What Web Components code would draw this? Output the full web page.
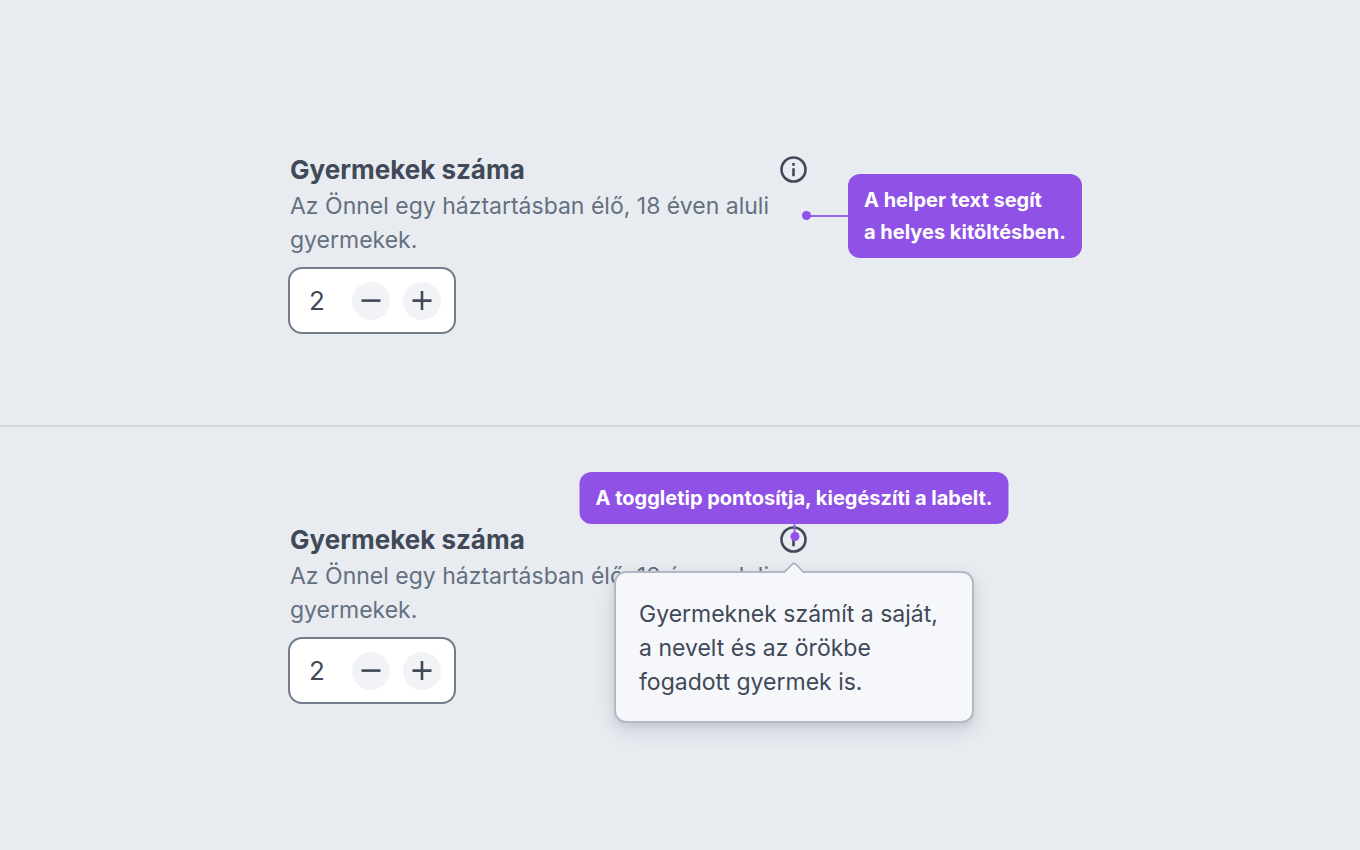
<!DOCTYPE html>
<html lang="hu">
<head>
<meta charset="utf-8">
<meta name="viewport" content="width=device-width, initial-scale=1">
<title>Gyermekek száma</title>
<style>
  body {
    margin: 0;
    background: #e8ecf1;
    color: #404957;
    font-family: Inter, "Liberation Sans", sans-serif;
  }
</style>
</head>
<body>
<doc-board>
  <doc-example>
    <stepper-field name="Gyermekek száma" value="2">
      Az Önnel egy háztartásban élő, 18 éven aluli gyermekek.
      <call-out slot="side" pointer="left">A helper text segít<br>a helyes kitöltésben.</call-out>
    </stepper-field>
  </doc-example>
  <doc-example compact>
    <stepper-field name="Gyermekek száma" value="2">
      Az Önnel egy háztartásban élő, 18 éven aluli gyermekek.
      <toggle-tip slot="tip">Gyermeknek számít a saját,<br>a nevelt és az örökbe<br>fogadott gyermek is.</toggle-tip>
      <call-out slot="above" pointer="down">A toggletip pontosítja, kiegészíti a labelt.</call-out>
    </stepper-field>
  </doc-example>
</doc-board>

<script>
class ShadowElement extends HTMLElement {
  constructor() {
    super();
    this.attachShadow({ mode: "open" }).innerHTML = this.constructor.markup;
  }
}

class DocBoard extends ShadowElement {
  static markup = `
    <style>
      :host { display: grid; grid-template-rows: 1fr 1fr; min-height: 100vh; }
      ::slotted(:not(:first-child)) { border-top: 2px solid #d0d6dc; }
    </style>
    <slot></slot>`;
}

class DocExample extends ShadowElement {
  static markup = `
    <style>
      :host { display: block; box-sizing: border-box; padding: 152px 24px 80px; }
      :host([compact]) { padding-top: 95px; }
      .column { max-width: 784px; margin: 0 auto; }
    </style>
    <div class="column"><slot></slot></div>`;
}

class StepperField extends ShadowElement {
  static markup = `
    <style>
      :host { display: block; position: relative; max-width: 520px; }
      .head { display: flex; justify-content: space-between; align-items: center; height: 36px; padding-left: 2px; }
      label { font-size: 26px; font-weight: 650; line-height: 36px; }
      .info { position: relative; display: flex; }
      button { border: 0; padding: 0; background: none; color: inherit; cursor: pointer; }
      .info button { display: block; width: 28px; height: 28px; }
      svg { display: block; fill: none; stroke: currentColor; }
      p { margin: 0; padding: 1px 32px 0 2px; font-size: 23px; line-height: 34px; color: #64707f; }
      .control {
        display: flex; align-items: center; gap: 13px; box-sizing: border-box;
        width: 168px; height: 67px; margin-top: 10px; padding: 0 13px 0 19px;
        border: 2px solid #727c8a; border-radius: 14px; background: #fff;
      }
      input {
        flex: 1; min-width: 0; border: 0; padding: 0; background: none;
        color: inherit; font: inherit; font-size: 26px; line-height: 36px;
      }
      .control button {
        display: grid; place-items: center; width: 38px; height: 38px;
        border-radius: 50%; background: #f1f3f6; flex: none;
      }
    </style>
    <div class="head">
      <label for="count"></label>
      <div class="info">
        <button type="button" aria-label="Információ">
          <svg width="28" height="28" viewBox="0 0 28 28">
            <circle cx="13.5" cy="13.5" r="12" stroke-width="2.6"/>
            <path d="M13.5 12.2v8M13.5 7v2.8" stroke-width="2.6"/>
          </svg>
        </button>
        <slot name="tip"></slot>
        <slot name="above"></slot>
      </div>
    </div>
    <p id="help"><slot></slot></p>
    <div class="control">
      <input id="count" type="text" inputmode="numeric" aria-describedby="help">
      <button type="button" id="less" aria-label="Kevesebb">
        <svg width="20" height="20" viewBox="0 0 20 20"><path d="M.5 9.6h19" stroke-width="2.6"/></svg>
      </button>
      <button type="button" id="more" aria-label="Több">
        <svg width="20" height="20" viewBox="0 0 20 20"><path d="M.5 9.6h19M10 .1v19" stroke-width="2.6"/></svg>
      </button>
    </div>
    <slot name="side"></slot>`;

  connectedCallback() {
    const find = (id) => this.shadowRoot.getElementById(id);
    const input = find("count");
    this.shadowRoot.querySelector("label").textContent = this.getAttribute("name");
    input.value = this.getAttribute("value");
    find("less").onclick = () => { input.value = Math.max(0, Number(input.value) - 1); };
    find("more").onclick = () => { input.value = Number(input.value) + 1; };
  }
}

class ToggleTip extends ShadowElement {
  static markup = `
    <style>
      :host {
        display: block; position: absolute; z-index: 1; top: 45px; left: 50%;
        width: 360px; box-sizing: border-box; transform: translateX(-50%);
        padding: 24px 23px 22px; border: 2px solid #b2b8c4; border-radius: 12px;
        background: #f6f7fb; font-size: 23px; line-height: 34px;
        box-shadow: 0 8px 20px rgba(50, 60, 80, .14), 0 4px 8px rgba(50, 60, 80, .08);
      }
      svg { position: absolute; top: -11px; left: 50%; margin-left: -12px; }
    </style>
    <svg width="24" height="12" viewBox="0 0 24 12">
      <path d="M1 12 2 11 10.2 2.4Q12 .6 13.8 2.4L22 11 23 12Z" fill="#f6f7fb"/>
      <path d="M1 10.5 2.5 10 10.2 2.2Q12 .4 13.8 2.2L21.5 10 23 10.5" fill="none" stroke="#a8afbc" stroke-width="1.6"/>
    </svg>
    <slot></slot>`;
}

class CallOut extends ShadowElement {
  static markup = `
    <style>
      :host {
        display: block; position: absolute; z-index: 2; box-sizing: border-box;
        padding: 10px 16px; border-radius: 12px; background: #8f51e6; color: #fff;
        font-size: 20px; font-weight: 700; line-height: 32px; white-space: nowrap;
      }
      :host([pointer="left"]) { left: 560px; top: 22px; }
      :host([pointer="down"]) { left: 50%; bottom: 30px; transform: translateX(-50%); }
      i { position: absolute; background: #9b62ea; }
      b { position: absolute; width: 9px; height: 9px; border-radius: 50%; background: #8f51e6; }
      :host([pointer="left"]) i { right: 100%; top: 50%; width: 40px; height: 2px; margin-top: -1px; }
      :host([pointer="left"]) b { right: 100%; top: 50%; margin: -5px 37px 0 0; }
      :host([pointer="down"]) i { top: 100%; left: 50%; width: 2px; height: 10px; margin-left: -1px; }
      :host([pointer="down"]) b { top: 100%; left: 50%; margin: 8px 0 0 -4px; }
    </style>
    <slot></slot><i></i><b></b>`;
}

customElements.define("doc-board", DocBoard);
customElements.define("doc-example", DocExample);
customElements.define("stepper-field", StepperField);
customElements.define("toggle-tip", ToggleTip);
customElements.define("call-out", CallOut);
</script>
</body>
</html>
